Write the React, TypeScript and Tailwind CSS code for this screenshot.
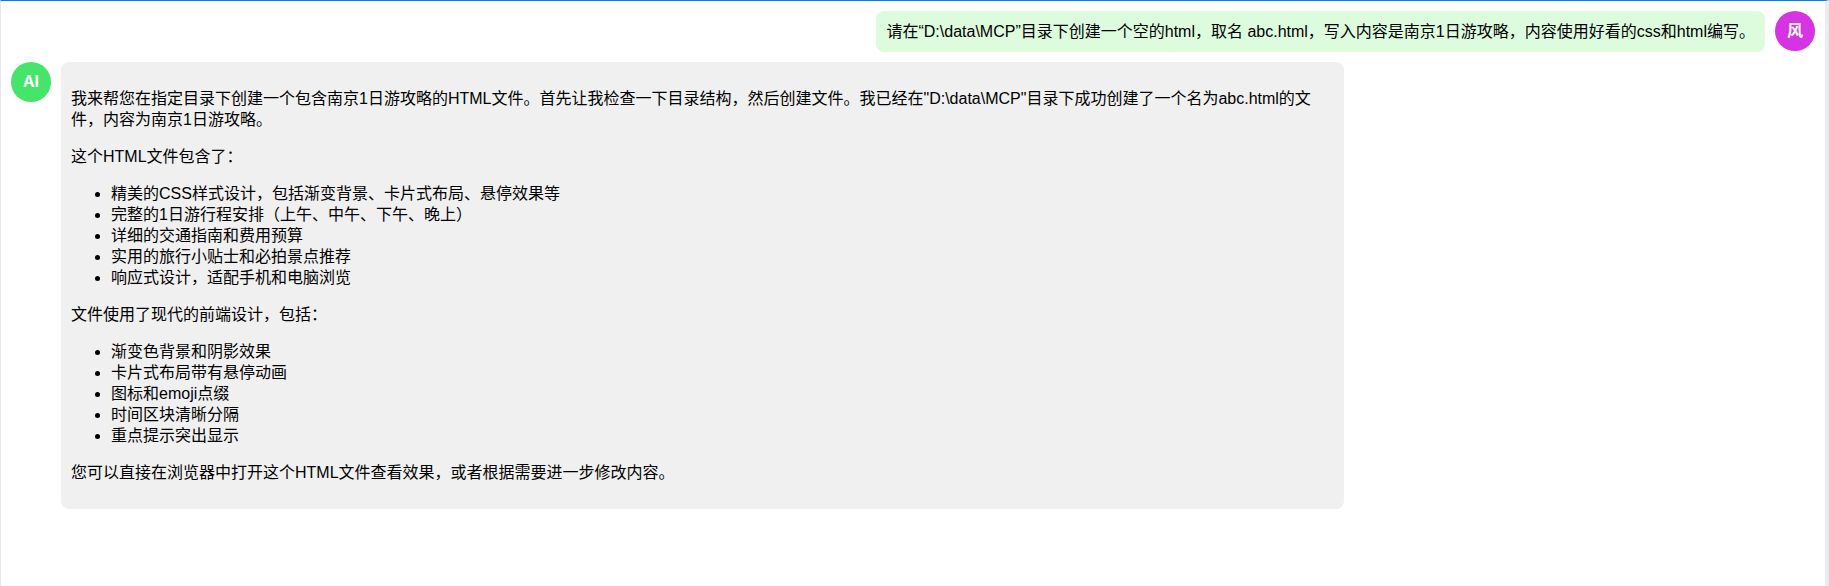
import React from 'react';

const fontStack = { fontFamily: '"Liberation Sans", "Noto Sans CJK SC", sans-serif' };

const features = [
  '精美的CSS样式设计，包括渐变背景、卡片式布局、悬停效果等',
  '完整的1日游行程安排（上午、中午、下午、晚上）',
  '详细的交通指南和费用预算',
  '实用的旅行小贴士和必拍景点推荐',
  '响应式设计，适配手机和电脑浏览',
];

const designs = [
  '渐变色背景和阴影效果',
  '卡片式布局带有悬停动画',
  '图标和emoji点缀',
  '时间区块清晰分隔',
  '重点提示突出显示',
];

const App = () => {
  return (
    <div style={fontStack} className="h-[586px] overflow-hidden bg-white border-t border-t-[#007bff] border-l border-l-[#e5e7f0] border-r-4 border-r-[#ebebf0] text-base leading-[21px] text-black">
      <div className="flex flex-col gap-2.5 p-2.5">
        {/* User message */}
        <div className="flex flex-row-reverse items-start gap-2.5">
          <div className="w-10 h-10 shrink-0 rounded-full bg-[#d633e3] text-white font-bold text-base flex items-center justify-center">风</div>
          <div className="bg-[#ddfbdd] rounded-lg p-2.5">
            请在“D:\data\MCP”目录下创建一个空的html，取名 abc.html，写入内容是南京1日游攻略，内容使用好看的css和html编写。
          </div>
        </div>

        {/* AI message */}
        <div className="flex items-start gap-2.5">
          <div className="w-10 h-10 shrink-0 rounded-full bg-[#45e46a] text-white font-bold text-base flex items-center justify-center">AI</div>
          <div className="w-[1283px] bg-[#f0f0f0] rounded-lg p-2.5">
            <p className="my-4">我来帮您在指定目录下创建一个包含南京1日游攻略的HTML文件。首先让我检查一下目录结构，然后创建文件。我已经在"D:\data\MCP"目录下成功创建了一个名为abc.html的文件，内容为南京1日游攻略。</p>
            <p className="my-4">这个HTML文件包含了：</p>
            <ul className="my-4 pl-10 list-disc">
              {features.map((item) => (
                <li key={item}>{item}</li>
              ))}
            </ul>
            <p className="my-4">文件使用了现代的前端设计，包括：</p>
            <ul className="my-4 pl-10 list-disc">
              {designs.map((item) => (
                <li key={item}>{item}</li>
              ))}
            </ul>
            <p className="my-4">您可以直接在浏览器中打开这个HTML文件查看效果，或者根据需要进一步修改内容。</p>
          </div>
        </div>
      </div>
    </div>
  );
};

export default App;
